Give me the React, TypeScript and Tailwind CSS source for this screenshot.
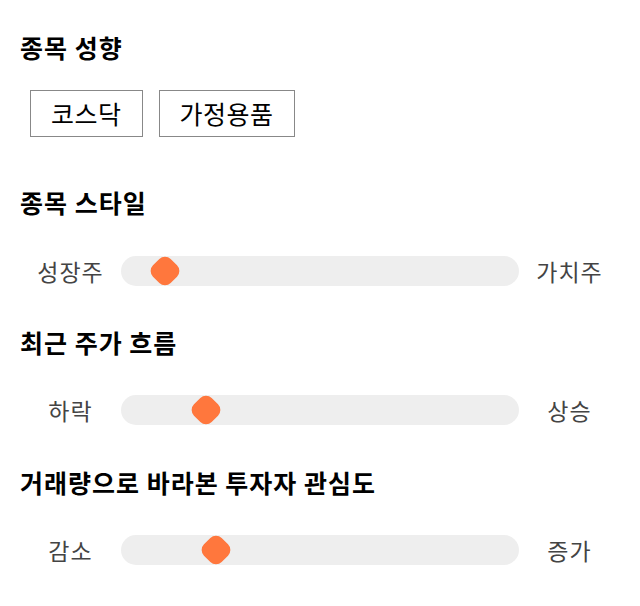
import React from 'react';

const font = { fontFamily: '"Noto Sans CJK KR", "Noto Sans", sans-serif' };

function Heading({ children }: { children: React.ReactNode }) {
  return <h2 className="text-[25px] leading-[32px] font-bold tracking-[1px] text-black">{children}</h2>;
}

function StyleSlider({ left, right, value }: { left: string; right: string; value: number }) {
  // value: thumb centre as a fraction of the track width
  return (
    <div className="flex h-[30px] items-center">
      <div className="w-[101px] text-center text-[23px] leading-[30px] tracking-[1px] text-[#444]">{left}</div>
      <div className="relative h-[30px] flex-1 rounded-full bg-[#eeeeee]">
        <div
          className="absolute top-1/2 h-[25px] w-[25px] -translate-x-1/2 -translate-y-1/2 rotate-45 rounded-[8px] bg-[#ff773d]"
          style={{ left: `${value * 100}%` }}
        />
      </div>
      <div className="w-[101px] text-center text-[23px] leading-[30px] tracking-[1px] text-[#444]">{right}</div>
    </div>
  );
}

export default function App() {
  return (
    <div className="min-h-[606px] w-[640px] bg-white px-5 pt-[31px]" style={font}>
      <Heading>종목 성향</Heading>
      <div className="mt-[27px] flex gap-4 pl-[10px]">
        <button className="h-[47px] border border-[#888] px-5 text-[25px] tracking-[0.5px] text-black">코스닥</button>
        <button className="h-[47px] border border-[#888] px-5 text-[25px] tracking-[0.5px] text-black">가정용품</button>
      </div>

      <div className="mt-[49px]">
        <Heading>종목 스타일</Heading>
      </div>
      <div className="mt-[38px]">
        <StyleSlider left="성장주" right="가치주" value={44 / 398} />
      </div>

      <div className="mt-[40px]">
        <Heading>최근 주가 흐름</Heading>
      </div>
      <div className="mt-[37px]">
        <StyleSlider left="하락" right="상승" value={85 / 398} />
      </div>

      <div className="mt-[41px]">
        <Heading>거래량으로 바라본 투자자 관심도</Heading>
      </div>
      <div className="mt-[37px]">
        <StyleSlider left="감소" right="증가" value={95 / 398} />
      </div>
    </div>
  );
}
